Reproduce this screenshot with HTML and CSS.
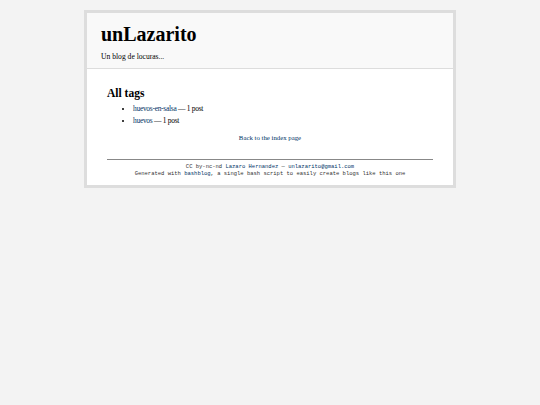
FILE: index.html
```html
<!DOCTYPE html>
<html lang="en">
<head>
    <meta charset="UTF-8">
    <meta name="viewport" content="width=device-width, initial-scale=1.0">
    <title>unLazarito — All tags</title>
    <link rel="stylesheet" href="styles.css">
</head>
<body>
    <div id="divbodyholder">
        <div class="headerholder">
            <div class="header">
                <h1 id="title">unLazarito</h1>
                <div id="description">Un blog de locuras...</div>
            </div>
        </div>
        <div id="divbody">
            <div class="content">
                <h3>All tags</h3>
                <ul>
                    <li><a href="#">huevos-en-salsa</a> — 1 post</li>
                    <li><a href="#">huevos</a> — 1 post</li>
                </ul>
                <div id="all_posts"><a href="#">Back to the index page</a></div>
            </div>
            <div id="footer">
                CC by-nc-nd <a href="#">Lazaro Hernandez</a> — <a href="#">unlazarito@gmail.com</a><br>
                Generated with <a href="#">bashblog</a>, a single bash script to easily create blogs like this one
            </div>
        </div>
    </div>
</body>
</html>
```

FILE: styles.css
```css
body{
    font-family: "Liberation Serif", "Times New Roman", serif;
    margin: 0;
    padding: 0;
    background-color: #f3f3f3;
    color: #000;
}
#divbodyholder{
    width: 366px;
    padding: 3px;
    background-color: #ddd;
    margin: 10px auto 0;
}
.headerholder{
    background-color: #f9f9f9;
    border-bottom: 1px solid #ddd;
}
.header{
    padding: 10px 14px 6px;
}
#title{
    font-size: 20px;
    font-weight: bold;
    line-height: 22px;
    margin: 0 0 7px;
}
#description{
    font-size: 7.6px;
    line-height: 10px;
}
#divbody{
    background-color: #fff;
    padding: 0 20px 8px;
}
.content{
    padding-top: 17px;
    padding-bottom: 16px;
}
h3{
    font-size: 11.5px;
    line-height: 14px;
    margin: 0 0 3px;
}
ul{
    margin: 0;
    padding-left: 26px;
    font-size: 7.4px;
    letter-spacing: -0.25px;
    line-height: 12px;
}
a{
    text-decoration: none;
    color: #003366;
}
#all_posts{
    margin-top: 6px;
    text-align: center;
    font-size: 6.8px;
    line-height: 10px;
}
#footer{
    border-top: 1px solid #888;
    padding-top: 3px;
    text-align: center;
    font-family: "Liberation Mono", "Courier New", monospace;
    font-size: 5.5px;
    line-height: 7px;
    color: #333;
}
```
